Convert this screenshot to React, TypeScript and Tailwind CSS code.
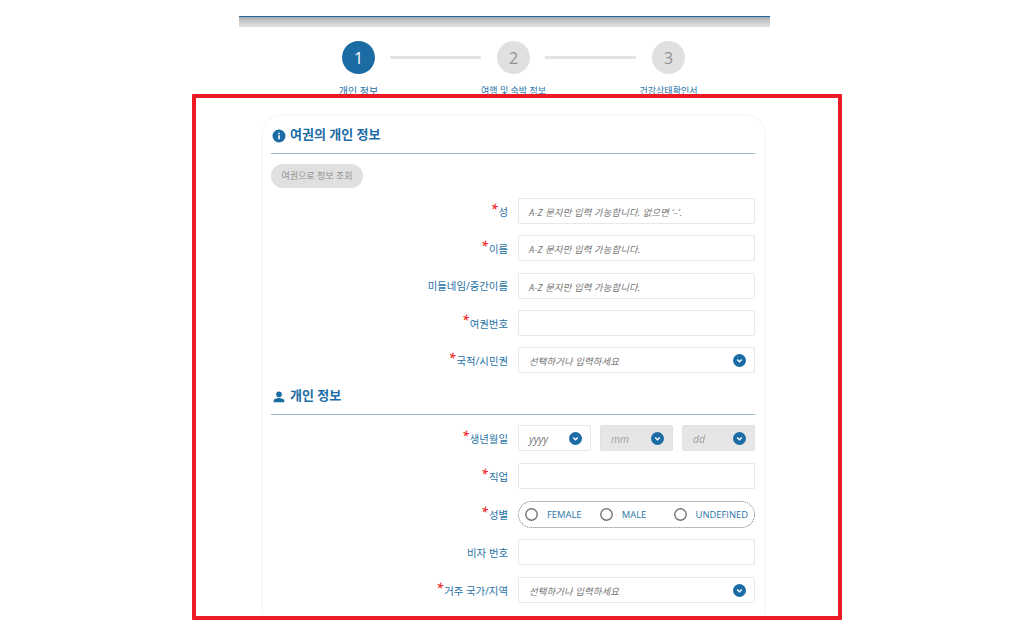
import React from 'react'

const Chevron = () => (
  <svg className="w-[13px] h-[13px] shrink-0" viewBox="0 0 13 13" fill="none">
    <circle cx="6.5" cy="6.5" r="6.5" fill="#1b6ca5" />
    <path d="M4.2 5.6 6.5 7.8 8.8 5.6" stroke="#fff" strokeWidth="1.4" />
  </svg>
)

const Step = ({ number, label, active = false }: { number: number; label: string; active?: boolean }) => (
  <div className="flex flex-col items-center w-[33px] shrink-0">
    <div className={`flex items-center justify-center w-[33px] h-[33px] rounded-full text-[16px] ${active ? 'bg-[#1b6ca5] text-white' : 'bg-[#e0e0e0] text-[#929292]'}`}>
      <span>{number}</span>
    </div>
    <span className={`mt-[10px] leading-[14px] whitespace-nowrap text-[#2873a6] ${active ? 'text-[10px]' : 'text-[9px]'}`}>{label}</span>
  </div>
)

const StepLine = () => <div className="w-[91px] h-[3px] mt-[15px] bg-[#e4e4e4]" />

const SectionTitle = ({ icon, children }: { icon: React.ReactNode; children: React.ReactNode }) => (
  <div className="flex items-center gap-[4px] pl-px h-[38px] border-b border-[#94bad1] text-[13px] font-bold text-[#1b6ca5]">
    {icon}
    <h2>{children}</h2>
  </div>
)

const Row = ({ label, required = false, children }: { label: string; required?: boolean; children: React.ReactNode }) => (
  <div className="flex items-center gap-[10px] h-[26px]">
    <div className="flex items-center justify-end w-[237px] h-[26px] text-[10.4px] text-[#2873a6]">
      {required && <span className="text-[12px] leading-[12px] font-semibold italic text-[#f02020] mr-[1px] -mt-[5px]">*</span>}
      <span className="mt-[3px]">{label}</span>
    </div>
    {children}
  </div>
)

const Field = ({ placeholder = '', select = false }: { placeholder?: string; select?: boolean }) => (
  <div className="flex items-center justify-between w-[237px] h-[26px] pl-[10px] pr-[8px] border border-[#e8e8e8] rounded-[2px] bg-white">
    <span className="mt-[4px] text-[9.4px] tracking-[0.13px] italic text-[#757575]">{placeholder}</span>
    {select && <Chevron />}
  </div>
)

const DateSelect = ({ placeholder, disabled = false }: { placeholder: string; disabled?: boolean }) => (
  <div className={`flex items-center justify-between w-[73px] h-[26px] pl-[10px] pr-[8px] border rounded-[2px] ${disabled ? 'bg-[#e6e6e6] border-[#e2e2e2] text-[#a0a0a0]' : 'bg-white border-[#e8e8e8] text-[#757575]'}`}>
    <span className="mt-[4px] text-[10.4px] italic">{placeholder}</span>
    <Chevron />
  </div>
)

const Radio = ({ label }: { label: string }) => (
  <div className="flex items-center gap-[9px]">
    <svg className="w-[13px] h-[13px]" viewBox="0 0 13 13">
      <circle cx="6.5" cy="6.5" r="5.7" fill="#fff" stroke="#757575" strokeWidth="1.4" />
    </svg>
    <span className="mt-px text-[9.4px] text-[#2873a6]">{label}</span>
  </div>
)

const InfoIcon = () => (
  <svg className="w-[14px] h-[14px] mt-[2px]" viewBox="0 0 14 14">
    <circle cx="7" cy="7" r="6.5" fill="#1b6ca5" />
    <path d="M6.2 3.7h1.6v1.5H6.2zM6.2 6.3h1.6v4H6.2z" fill="#fff" />
  </svg>
)

const PersonIcon = () => (
  <svg className="w-[14px] h-[14px] mt-[2px]" viewBox="0 0 14 14" fill="#1b6ca5">
    <circle cx="7" cy="4.4" r="2.8" />
    <path d="M1.7 12.2v-1.4C1.7 9 5.2 8.1 7 8.1s5.3.9 5.3 2.7v1.4z" />
  </svg>
)

const App = () => {
  return (
    <div className="relative w-[1013px] h-[636px] overflow-hidden bg-white font-['Open_Sans','Noto_Sans_CJK_KR',sans-serif]">
      <main className="w-[531px] ml-[239px] pt-[16px]">
        <div className="h-[11px] border-t border-[#1b6ca5] bg-linear-to-b from-[#a8a8aa] via-[#cfcfd0] to-[#dfdfe0]" />

        <div className="flex pt-[14px] pl-[103px] h-[87px]">
          <Step number={1} label="개인 정보" active />
          <div className="pl-[15px] pr-[16px]"><StepLine /></div>
          <Step number={2} label="여행 및 숙박 정보" />
          <div className="pl-[15px] pr-[16px]"><StepLine /></div>
          <Step number={3} label="건강상태확인서" />
        </div>

        <section className="w-[505px] h-[499px] ml-[22px] pl-[8px] pr-[9px] border-2 border-b-0 border-[#f9f9f9] rounded-t-[20px]">
          <SectionTitle icon={<InfoIcon />}>여권의 개인 정보</SectionTitle>
          <button className="block mt-[10px] w-[92px] h-[24px] rounded-full bg-[#e0e0e0] text-[9px] text-[#929292]">
            여권으로 정보 조회
          </button>
          <div className="flex flex-col gap-[11.3px] mt-[10px]">
            <Row label="성" required><Field placeholder="A-Z 문자만 입력 가능합니다. 없으면 ‘–’." /></Row>
            <Row label="이름" required><Field placeholder="A-Z 문자만 입력 가능합니다." /></Row>
            <Row label="미들네임/중간이름"><Field placeholder="A-Z 문자만 입력 가능합니다." /></Row>
            <Row label="여권번호" required><Field /></Row>
            <Row label="국적/시민권" required><Field placeholder="선택하거나 입력하세요" select /></Row>
          </div>

          <div className="mt-[4px]">
            <SectionTitle icon={<PersonIcon />}>개인 정보</SectionTitle>
          </div>
          <div className="flex flex-col gap-[12px] mt-[10px]">
            <Row label="생년월일" required>
              <div className="flex justify-between w-[237px]">
                <DateSelect placeholder="yyyy" />
                <DateSelect placeholder="mm" disabled />
                <DateSelect placeholder="dd" disabled />
              </div>
            </Row>
            <Row label="직업" required><Field /></Row>
            <Row label="성별" required>
              <div className="flex items-center justify-between w-[237px] h-[27px] px-[6px] border border-dotted border-[#777] rounded-full">
                <Radio label="FEMALE" />
                <div className="mr-[9px]"><Radio label="MALE" /></div>
                <Radio label="UNDEFINED" />
              </div>
            </Row>
            <Row label="비자 번호"><Field /></Row>
            <Row label="거주 국가/지역" required><Field placeholder="선택하거나 입력하세요" select /></Row>
          </div>
        </section>
      </main>

      {/* highlight frame over the form */}
      <div className="absolute left-[192px] top-[94px] w-[650px] h-[526px] border-4 border-[#ed1c24] rounded-[1px]" />
    </div>
  )
}

export default App
